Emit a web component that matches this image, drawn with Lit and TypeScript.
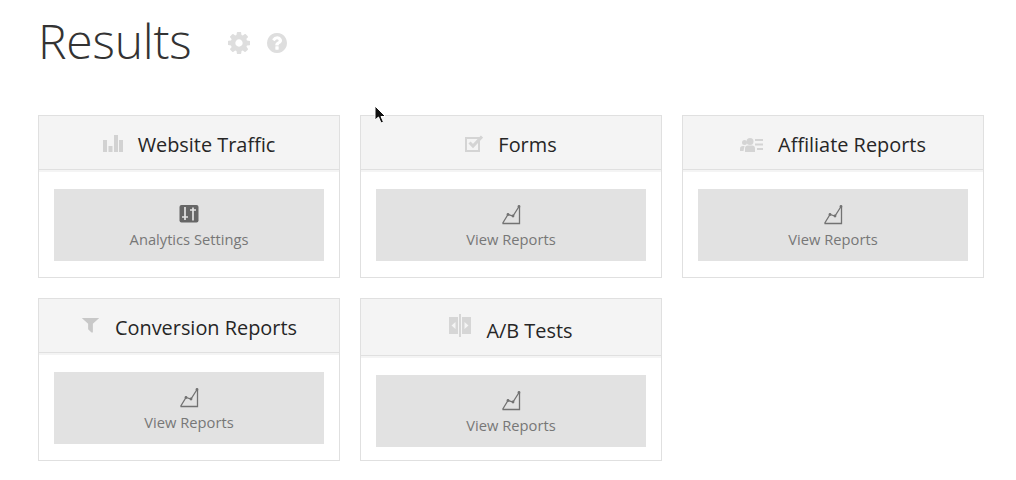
import { LitElement, html, css, svg } from "lit";
import { customElement } from "lit/decorators.js";

const chart = svg`<svg class="ico-btn" width="20" height="21" viewBox="0 0 20 21"><path d="M1.500 19.500H18.500V3M1.500 19.500L7 10.500L12 12L18 2.500" fill="none" stroke="#727272" stroke-width="1.300"/><circle cx="7" cy="10.500" r="1.400" fill="#727272"/><circle cx="12" cy="12" r="1.400" fill="#727272"/><circle cx="18" cy="2.500" r="1.400" fill="#727272"/></svg>`;

const sliders = svg`<svg class="ico-btn" width="20" height="21" viewBox="0 0 20 21"><rect x="0.500" y="1" width="19" height="17.500" rx="2" fill="#666"/><path d="M6 3V16M3 13H9M14 3.500V16.500M11 6H17" stroke="#e2e2e2" stroke-width="1.700" fill="none"/></svg>`;

const icons: Record<string, unknown> = {
  bars: svg`<svg width="20" height="17" viewBox="0 1 20 17"><g fill="#d2d2d2"><rect x="0" y="6" width="4" height="12"/><rect x="5.500" y="12" width="4" height="6"/><rect x="11" y="1" width="4" height="17"/><rect x="16" y="6" width="4" height="12"/></g></svg>`,
  check: svg`<svg width="18" height="17" viewBox="0 0 18 17"><path d="M1 3H14V16H1Z" fill="none" stroke="#d4d4d4" stroke-width="2"/><path d="M4.500 7.500L8 11L17 1.500" fill="none" stroke="#d4d4d4" stroke-width="3"/></svg>`,
  people: svg`<svg width="23" height="14" viewBox="0 3 23 14"><g fill="#d4d4d4"><circle cx="10" cy="6.500" r="3.500"/><path d="M5 17V13.500Q5 10.500 8 10.500H12Q15 10.500 15 13.500V17Z"/><circle cx="4.500" cy="7.500" r="2.500"/><path d="M0 16V13.500Q0 11 3 11H4.500L3.500 16Z"/><rect x="15" y="4" width="8" height="2"/><rect x="15" y="8.500" width="8" height="2"/><rect x="17" y="13" width="6" height="2"/></g></svg>`,
  filter: svg`<svg width="19" height="17" viewBox="128 346 1536 1536" preserveAspectRatio="none"><path fill="#c8c8c8" d="M1595 295q17 41-14 70l-493 493v742q0 42-39 59-13 5-25 5-27 0-45-19l-256-256q-19-19-19-45v-486l-493-493q-31-29-14-70 17-39 59-39h1280q42 0 59 39z"/></svg>`,
  ab: svg`<svg class="over" width="22" height="22" viewBox="0 0 22 22"><g fill="#d6d6d6"><rect x="0" y="1" width="9" height="17"/><rect x="13" y="1" width="9" height="17"/><rect x="10" y="-2" width="2" height="23"/></g><path d="M6.500 6V13L2.500 9.500Z M15.500 6V13L19.500 9.500Z" fill="#f4f4f4"/></svg>`,
};

const cards = [
  { t: "Website Traffic", i: "bars", b: "Analytics Settings", s: true },
  { t: "Forms", i: "check", b: "View Reports", s: false },
  { t: "Affiliate Reports", i: "people", b: "View Reports", s: false },
  { t: "Conversion Reports", i: "filter", b: "View Reports", s: false },
  { t: "A/B Tests", i: "ab", b: "View Reports", s: false },
];

@customElement("app-root")
export class AppRoot extends LitElement {
  static styles = css`
    :host {
      display: block;
      position: relative;
      width: 1016px;
      height: 480px;
      background: #fff;
      font-family: "Open Sans", "Noto Sans", sans-serif;
      overflow: hidden;
    }
    .head {
      display: flex;
      align-items: center;
      padding: 7px 38px 0;
      height: 67px;
      margin-bottom: 41px;
    }
    h1 {
      margin: 0;
      font-size: 48px;
      font-weight: 300;
      line-height: 68px;
      letter-spacing: -0.2px;
      color: #333;
    }
    .head-icons {
      display: flex;
      align-items: center;
      gap: 17px;
      margin-left: 37px;
      margin-top: 5px;
    }
    .head-icons svg { display: block; }
    .grid {
      display: grid;
      grid-template-columns: repeat(3, 302px);
      grid-auto-rows: 163px;
      gap: 20px;
      padding: 0 38px;
    }
    .card {
      display: flex;
      flex-direction: column;
      border: 1px solid #e0e0e0;
      background: #fff;
    }
    .card-head {
      display: flex;
      justify-content: center;
      align-items: baseline;
      gap: 15px;
      padding: 17px 0 12px;
      background: #f4f4f4;
      border-bottom: 1px solid #e0e0e0;
      box-shadow: 0 2px 0 #f4f4f4;
    }
    .card-head svg { display: block; }
    .card-head svg.over { overflow: visible; }
    .title {
      font-size: 19.9px;
      line-height: 24px;
      font-weight: 400;
      color: #262626;
    }
    .body { padding: 19px 15px 0; }
    .btn {
      display: flex;
      flex-direction: column;
      align-items: center;
      padding: 15px 0 12px;
      background: #e2e2e2;
    }
    .ico-btn { display: block; margin-bottom: 4px; }
    .label {
      font-size: 14.7px;
      line-height: 20px;
      color: #777;
    }
    .cursor {
      position: absolute;
      left: 374px;
      top: 105px;
      display: block;
    }
  `;

  render() {
    return html`
      <div class="head">
        <h1>Results</h1>
        <div class="head-icons">
          <svg width="22" height="22" viewBox="128 128 1536 1536"><path fill="#dedede" d="M1152 896q0-106-75-181t-181-75-181 75-75 181 75 181 181 75 181-75 75-181zm512-109v222q0 12-8 23t-20 13l-185 28q-19 54-39 91 35 50 107 138 10 12 10 25t-9 23q-27 37-99 108t-94 71q-12 0-26-9l-138-108q-44 23-91 38-16 136-29 186-7 28-36 28h-222q-14 0-24.500-8.500t-11.500-21.500l-28-184q-49-16-90-37l-141 107q-10 9-25 9-14 0-25-11-126-114-165-168-7-10-7-23 0-12 8-23 15-21 51-66.500t54-70.500q-27-50-41-99l-183-27q-13-2-21-12.500t-8-23.500v-222q0-12 8-23t19-13l186-28q14-46 39-92-40-57-107-138-10-12-10-24 0-10 9-23 26-36 98.500-107.500t94.500-71.500q13 0 26 10l138 107q44-23 91-38 16-136 29-186 7-28 36-28h222q14 0 24.500 8.500t11.500 21.500l28 184q49 16 90 37l142-107q9-9 24-9 13 0 25 10 129 119 165 170 7 8 7 22 0 12-8 23-15 21-51 66.500t-54 70.500q26 50 41 98l183 28q13 2 21 12.500t8 23.500z"/></svg>
          <svg width="20" height="20" viewBox="128 128 1536 1536"><path fill="#dedede" d="M1024 1376v-192q0-14-9-23t-23-9h-192q-14 0-23 9t-9 23v192q0 14 9 23t23 9h192q14 0 23-9t9-23zm256-672q0-88-55.500-163t-138.500-116-170-41q-243 0-371 213-15 24 8 42l132 100q7 6 19 6 16 0 25-12 53-68 86-92 34-24 86-24 48 0 85.500 26t37.500 59q0 38-20 61t-68 45q-63 28-115.500 86.500t-52.500 125.500v36q0 14 9 23t23 9h192q14 0 23-9t9-23q0-19 21.500-49.500t54.500-49.500q32-18 49-28.500t46-35 44.500-48 28-60.500 12.500-81zm384 192q0 209-103 385.500t-279.500 279.500-385.500 103-385.500-103-279.500-279.500-103-385.500 103-385.500 279.500-279.500 385.500-103 385.500 103 279.500 279.500 103 385.500z"/></svg>
        </div>
      </div>
      <div class="grid">
        ${cards.map(
          (c) => html`
            <div class="card">
              <div class="card-head">
                ${icons[c.i]}
                <span class="title">${c.t}</span>
              </div>
              <div class="body">
                <div class="btn">
                  ${c.s ? sliders : chart}
                  <span class="label">${c.b}</span>
                </div>
              </div>
            </div>
          `
        )}
      </div>
      <svg class="cursor" width="14" height="20" viewBox="0 0 14 20"><path d="M1 1V15L4.500 12L7 18L9.500 17L7 11.500H11.500Z" fill="#111" stroke="#fff" stroke-width="1"/></svg>
    `;
  }
}
